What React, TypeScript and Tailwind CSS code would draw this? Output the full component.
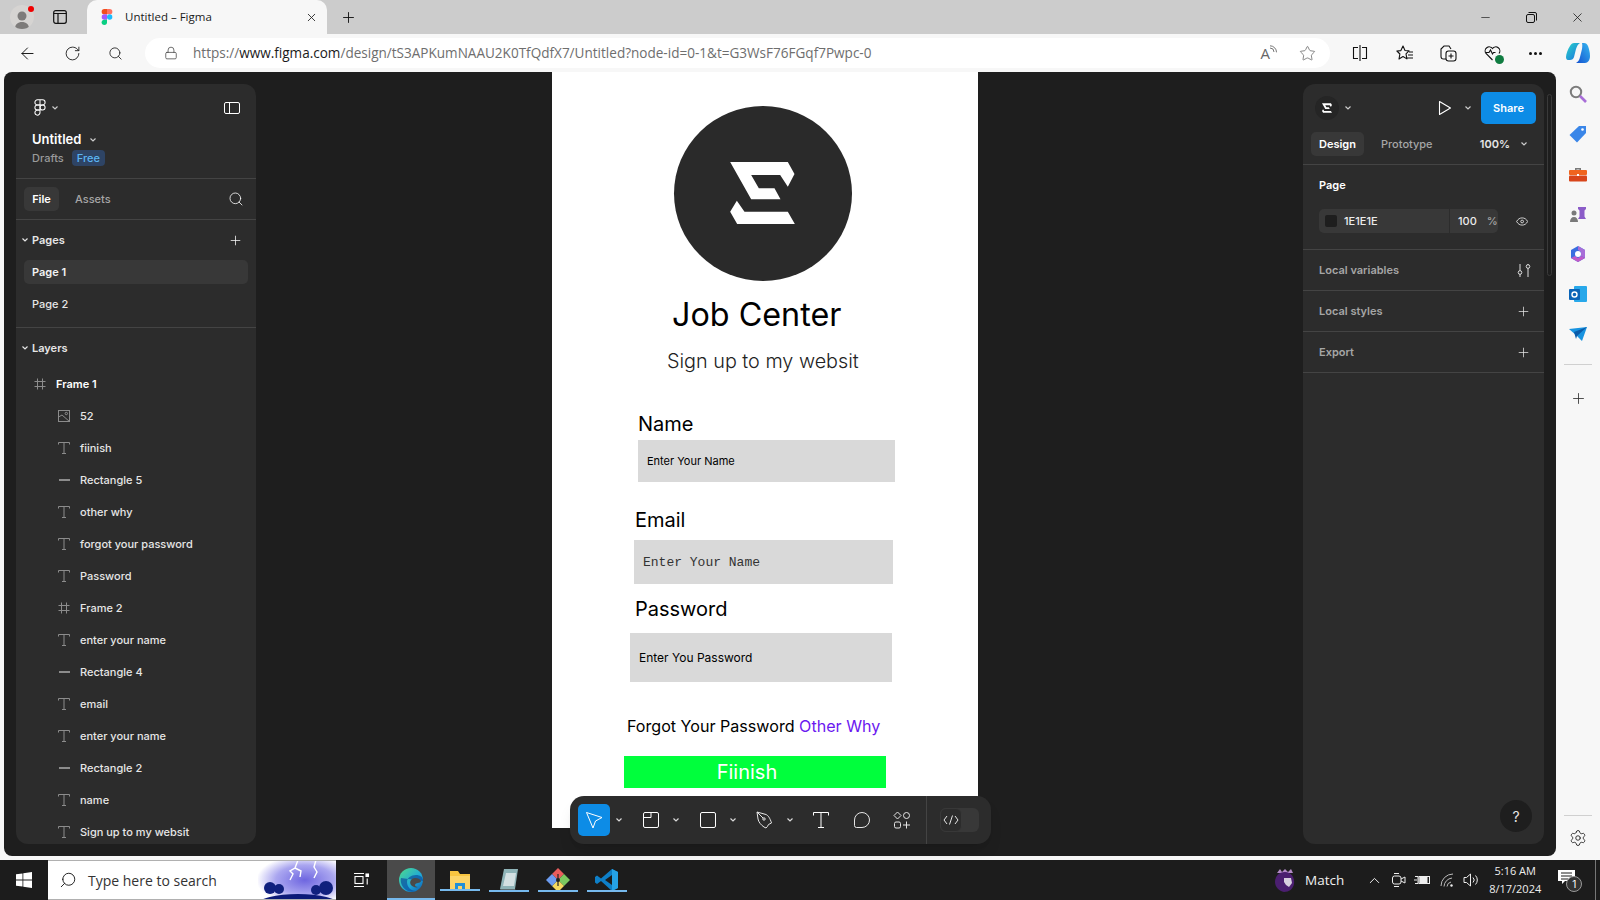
import React from 'react'
import { ArrowLeft, RotateCw, Search, Lock, Star, Plus, X, Minus, ChevronUp, Settings } from 'lucide-react'

const Chevron = ({ className = '' }: { className?: string }) => (
  <svg width="8" height="6" viewBox="0 0 8 6" className={className} fill="none" stroke="currentColor" strokeWidth="1.2">
    <path d="M1.5 1.5 4 4l2.5-2.5" />
  </svg>
)

const LogoMark = ({ className = '' }: { className?: string }) => (
  <svg viewBox="272 216 194 186" className={className} fill="#fff">
    <polygon points="272,216 445,216 465,252 445,290 422,255 335,255 358,295 405,295 423,328 335,328" />
    <polygon points="292,332 272,365 293,402 466,402 445,365 315,365" />
  </svg>
)

const FigmaOutline = () => (
  <svg width="14" height="17" viewBox="0 0 14 20" fill="none" stroke="#fff" strokeWidth="1.2">
    <path d="M7 1H4a3 3 0 0 0 0 6h3V1Zm0 0h3a3 3 0 0 1 0 6H7" />
    <path d="M7 7H4a3 3 0 0 0 0 6h3V7Z" />
    <circle cx="10" cy="10" r="3" />
    <path d="M7 13H4a3 3 0 1 0 3 3v-3Z" />
  </svg>
)

const FigmaColor = () => (
  <svg width="12" height="16" viewBox="0 0 12 18">
    <path d="M6 0H3a3 3 0 0 0 0 6h3V0Z" fill="#f24e1e" />
    <path d="M6 0h3a3 3 0 0 1 0 6H6V0Z" fill="#ff7262" />
    <path d="M6 6H3a3 3 0 0 0 0 6h3V6Z" fill="#a259ff" />
    <circle cx="9" cy="9" r="3" fill="#1abcfe" />
    <path d="M3 12h3v3a3 3 0 1 1-3-3Z" fill="#0acf83" />
  </svg>
)

const SidebarToggle = () => (
  <svg width="16" height="12" viewBox="0 0 16 12" fill="none" stroke="#fff" strokeWidth="1">
    <rect x="0.5" y="0.5" width="15" height="11" rx="1.5" />
    <path d="M5.5 0.5v11" />
  </svg>
)

const HashIcon = ({ color = '#8c8c8c' }: { color?: string }) => (
  <svg width="12" height="12" viewBox="0 0 12 12" fill="none" stroke={color} strokeWidth="1">
    <path d="M3.5 0.5v11M8.5 0.5v11M0.5 3.5h11M0.5 8.5h11" />
  </svg>
)

const TextIcon = () => (
  <svg width="12" height="12" viewBox="0 0 12 12" fill="none" stroke="#8c8c8c" strokeWidth="1">
    <path d="M0.5 2.5v-2h11v2M6 0.5v11M4 11.5h4" />
  </svg>
)

const RectIcon = () => <div className="h-[2px] w-[11px] bg-[#8c8c8c]" />

const ImageIcon = () => (
  <svg width="12" height="12" viewBox="0 0 12 12" fill="none" stroke="#8c8c8c" strokeWidth="1">
    <rect x="0.5" y="0.5" width="11" height="11" />
    <circle cx="8.3" cy="3.5" r="1.2" />
    <path d="M0.5 7 4 5l7.5 6.5" />
  </svg>
)

const layers: { name: string; icon: 'text' | 'rect' | 'image' | 'frame' }[] = [
  { name: '52', icon: 'image' },
  { name: 'fiinish', icon: 'text' },
  { name: 'Rectangle 5', icon: 'rect' },
  { name: 'other why', icon: 'text' },
  { name: 'forgot your password', icon: 'text' },
  { name: 'Password', icon: 'text' },
  { name: 'Frame 2', icon: 'frame' },
  { name: 'enter your name', icon: 'text' },
  { name: 'Rectangle 4', icon: 'rect' },
  { name: 'email', icon: 'text' },
  { name: 'enter your name', icon: 'text' },
  { name: 'Rectangle 2', icon: 'rect' },
  { name: 'name', icon: 'text' },
  { name: 'Sign up to my websit', icon: 'text' },
]

const LeftPanel = () => (
  <aside className="flex h-full w-[240px] flex-col overflow-hidden rounded-xl bg-[#2c2c2c] text-[11px] font-medium text-[#e6e6e6]">
    <div className="h-[95px] shrink-0 border-b border-[#444444] px-4">
      <div className="flex h-[47px] items-center justify-between">
        <div className="flex items-center gap-[4px] pl-[1px] text-[#cccccc]">
          <FigmaOutline />
          <Chevron />
        </div>
        <SidebarToggle />
      </div>
      <div className="flex h-[18px] items-center gap-2 text-[13px] font-semibold text-white">
        Untitled
        <Chevron className="text-[#cccccc]" />
      </div>
      <div className="flex h-[18px] items-center gap-2 text-[#9a9a9a]">
        Drafts
        <span className="flex h-[16px] items-center rounded bg-[#2e4465] px-[5px] text-[#5bb5f2]">Free</span>
      </div>
    </div>
    <div className="flex h-[41px] shrink-0 items-center border-b border-[#444444] pl-2 pr-[12px]">
      <div className="flex h-[24px] w-[35px] items-center justify-center rounded-[5px] bg-[#383838] font-semibold text-white">File</div>
      <div className="ml-[16px] text-[#a6a6a6]">Assets</div>
      <Search size={16} strokeWidth={1.2} className="ml-auto text-white" />
    </div>
    <div className="h-[108px] shrink-0 border-b border-[#444444]">
      <div className="flex h-[40px] items-center pl-[5px] pr-[13px] font-semibold">
        <Chevron className="mr-[3px]" />
        Pages
        <Plus size={15} strokeWidth={1.2} className="ml-auto text-white" />
      </div>
      <div className="mx-2 flex h-[24px] items-center rounded-[5px] bg-[#383838] px-2 font-semibold text-[#f2f2f2]">Page 1</div>
      <div className="mx-2 mt-[8px] flex h-[24px] items-center px-2 text-[#e6e6e6]">Page 2</div>
    </div>
    <div className="flex h-[40px] shrink-0 items-center pl-[5px] font-semibold">
      <Chevron className="mr-[3px]" />
      Layers
    </div>
    <div className="flex h-[32px] shrink-0 items-center pl-[18px]">
      <HashIcon />
      <span className="ml-[10px] font-semibold text-white">Frame 1</span>
    </div>
    {layers.map((layer, i) => (
      <div key={i} className="flex h-[32px] shrink-0 items-center pl-[42px]">
        <div className="flex w-[12px] items-center justify-center">
          {layer.icon === 'text' && <TextIcon />}
          {layer.icon === 'rect' && <RectIcon />}
          {layer.icon === 'image' && <ImageIcon />}
          {layer.icon === 'frame' && <HashIcon />}
        </div>
        <span className="ml-[10px]">{layer.name}</span>
      </div>
    ))}
  </aside>
)

const RightPanel = () => (
  <aside className="relative flex h-full w-[241px] flex-col overflow-hidden rounded-xl bg-[#2c2c2c] text-[11px] font-medium text-[#e6e6e6]">
    <div className="h-[81px] shrink-0 border-b border-[#444444]">
      <div className="flex h-[48px] items-center pl-[12px] pr-2">
        <div className="flex h-[24px] w-[24px] items-center justify-center rounded-full bg-[#252525]">
          <LogoMark className="h-[10px] w-[10px]" />
        </div>
        <Chevron className="ml-[5px] text-[#cccccc]" />
        <svg width="14" height="16" viewBox="0 0 14 16" className="ml-auto mr-[12px]" fill="none" stroke="#fff" strokeWidth="1.1">
          <path d="M1.5 1.5v13L12.5 8 1.5 1.5Z" strokeLinejoin="round" />
        </svg>
        <Chevron className="mr-[9px] text-[#cccccc]" />
        <div className="flex h-[32px] w-[55px] items-center justify-center rounded-[5px] bg-[#0d8ce6] font-semibold text-white">Share</div>
      </div>
      <div className="flex h-[24px] items-center pl-2 pr-[16px]">
        <div className="flex h-[24px] w-[53px] items-center justify-center rounded-[5px] bg-[#383838] font-semibold text-white">Design</div>
        <div className="ml-[17px] text-[#a6a6a6]">Prototype</div>
        <div className="ml-auto font-semibold text-[#e6e6e6]">100%</div>
        <Chevron className="ml-[10px] text-[#cccccc]" />
      </div>
    </div>
    <div className="h-[85px] shrink-0 border-b border-[#444444] px-4">
      <div className="flex h-[40px] items-center font-semibold text-white">Page</div>
      <div className="mt-[4px] flex items-center">
        <div className="flex h-[24px] w-[184px] items-center rounded-[5px] bg-[#383838]">
          <div className="ml-[6px] h-[12px] w-[12px] rounded-[2px] bg-[#1e1e1e]" />
          <span className="ml-[7px] w-[105px] text-[#ececec]">1E1E1E</span>
          <div className="h-full w-px bg-[#2c2c2c]" />
          <span className="ml-[8px] text-[#ececec]">100</span>
          <span className="ml-[10px] text-[#a6a6a6]">%</span>
        </div>
        <svg width="16" height="11" viewBox="0 0 16 11" className="ml-[18px]" fill="none" stroke="#fff" strokeWidth="1">
          <path d="M.8 5.5C2.5 2.3 5 .8 8 .8s5.5 1.5 7.2 4.7C13.5 8.7 11 10.2 8 10.2S2.5 8.7.8 5.5Z" />
          <circle cx="8" cy="5.5" r="1.8" />
        </svg>
      </div>
    </div>
    <div className="flex h-[41px] shrink-0 items-center justify-between border-b border-[#444444] pl-4 pr-[13px] font-semibold text-[#a6a6a6]">
      Local variables
      <svg width="14" height="15" viewBox="0 0 14 15" fill="none" stroke="#ddd" strokeWidth="1">
        <path d="M3 1v7M3 11v3M11 1v1M11 5v9" />
        <circle cx="3" cy="9.5" r="1.8" />
        <circle cx="11" cy="3.5" r="1.8" />
      </svg>
    </div>
    <div className="flex h-[41px] shrink-0 items-center justify-between border-b border-[#444444] pl-4 pr-[13px] font-semibold text-[#a6a6a6]">
      Local styles
      <Plus size={15} strokeWidth={1.2} className="text-[#e6e6e6]" />
    </div>
    <div className="flex h-[41px] shrink-0 items-center justify-between border-b border-[#444444] pl-4 pr-[13px] font-semibold text-[#a6a6a6]">
      Export
      <Plus size={15} strokeWidth={1.2} className="text-[#e6e6e6]" />
    </div>
    <div className="absolute bottom-[12px] right-[12px] flex h-[32px] w-[32px] items-center justify-center rounded-full bg-[#1e1e1e] text-[14px] font-normal text-[#e6e6e6]">?</div>
  </aside>
)

// the design frame is a free canvas, its nodes sit where the designer dropped them
const DesignFrame = () => (
  <div className="absolute left-[548px] top-0 h-[756px] w-[426px] overflow-hidden bg-white font-['Inter',sans-serif] text-black">
    <div className="absolute left-[122px] top-[34px] flex h-[175px] w-[178px] items-center justify-center rounded-[50%] bg-[#2a2a2a]">
      <LogoMark className="mb-[2px] mr-[2px] h-[62px] w-[65px]" />
    </div>
    <div className="absolute left-[120px] top-[223px] whitespace-nowrap text-[32.3px] leading-[40px]">Job Center</div>
    <div className="absolute left-[115px] top-[277px] whitespace-nowrap text-[19.8px] font-light leading-[24px] text-[#222222]">Sign up to my websit</div>

    <div className="absolute left-[86px] top-[340px] text-[20px] leading-[24px]">Name</div>
    <div className="absolute left-[86px] top-[368px] flex h-[42px] w-[257px] items-center bg-[#d9d9d9] pl-[9px] text-[11px]">Enter Your Name</div>

    <div className="absolute left-[83px] top-[436px] text-[20px] leading-[24px]">Email</div>
    <div className="absolute left-[82px] top-[468px] flex h-[44px] w-[259px] items-center bg-[#d9d9d9] pl-[9px] pt-[1px] font-['Liberation_Mono',monospace] text-[13px] text-[#333333]">Enter Your Name</div>

    <div className="absolute left-[83px] top-[525px] text-[20px] leading-[24px]">Password</div>
    <div className="absolute left-[78px] top-[561px] flex h-[49px] w-[262px] items-center bg-[#d9d9d9] pl-[9px] text-[12px]">Enter You Password</div>

    <div className="absolute left-[75px] top-[644px] whitespace-nowrap text-[16.1px] leading-[20px]">
      Forgot Your Password <span className="text-[#6b18f0]">Other Why</span>
    </div>
    <div className="absolute left-[72px] top-[684px] flex h-[32px] w-[262px] items-center justify-center bg-[#00ff3c] pr-[16px] text-[20px] text-white">Fiinish</div>
  </div>
)

const ToolChevron = () => <Chevron className="mx-[5px] text-[#d9d9d9]" />

const Toolbar = () => (
  <div className="absolute bottom-[12px] left-[566px] flex h-[48px] w-[421px] items-center rounded-[14px] bg-[#2c2c2c] pl-2 shadow-lg">
    <div className="flex h-[32px] w-[32px] items-center justify-center rounded-[5px] bg-[#0d8ce6]">
      <svg width="18" height="18" viewBox="0 0 18 18" fill="none" stroke="#fff" strokeWidth="1">
        <path d="M1.5 1.5 17 6.5l-6.5 3.5L8 17 1.5 1.5Z" strokeLinejoin="round" />
      </svg>
    </div>
    <ToolChevron />
    <div className="ml-[7px] flex w-[32px] items-center justify-center">
      <svg width="16" height="16" viewBox="0 0 16 16" fill="none" stroke="#fff" strokeWidth="1">
        <rect x="0.5" y="0.5" width="15" height="15" rx="1.5" />
        <path d="M0.5 5.5h7.5v-5" />
      </svg>
    </div>
    <ToolChevron />
    <div className="ml-[7px] flex w-[32px] items-center justify-center">
      <svg width="16" height="16" viewBox="0 0 16 16" fill="none" stroke="#fff" strokeWidth="1">
        <rect x="0.5" y="0.5" width="15" height="15" rx="1.5" />
      </svg>
    </div>
    <ToolChevron />
    <div className="ml-[7px] flex w-[32px] items-center justify-center">
      <svg width="18" height="18" viewBox="0 0 18 18" fill="none" stroke="#e6e6e6" strokeWidth="1">
        <path d="M1 1l9 2.5c2 .8 4 3.5 5.5 8.5l-3 1.5c-.5 1.5-1.5 2.500-2.500 3.500l-2-1c-3-2-5.500-5-6-8L1 1Z" strokeLinejoin="round" />
        <path d="M1 1l6 6" />
        <circle cx="8" cy="8" r="1.2" />
      </svg>
    </div>
    <ToolChevron />
    <div className="ml-[6px] flex w-[32px] items-center justify-center">
      <svg width="16" height="16" viewBox="0 0 16 16" fill="none" stroke="#fff" strokeWidth="1">
        <path d="M0.5 3.5v-3h15v3M8 0.5v15M5 15.5h6" />
      </svg>
    </div>
    <div className="ml-[9px] flex w-[32px] items-center justify-center">
      <svg width="16" height="16" viewBox="0 0 16 16" fill="none" stroke="#e6e6e6" strokeWidth="1">
        <path d="M8 .5a7.5 7.5 0 1 1 0 15H2.500a2 2 0 0 1-2-2V8A7.500 7.500 0 0 1 8 .5Z" />
      </svg>
    </div>
    <div className="ml-[8px] flex w-[32px] items-center justify-center">
      <svg width="18" height="18" viewBox="0 0 18 18" fill="none" stroke="#e6e6e6" strokeWidth="1">
        <path d="M4.5 1 8 4.5 4.5 8 1 4.5 4.5 1Z" />
        <circle cx="13.5" cy="4.5" r="3" />
        <rect x="1.5" y="11" width="6" height="6" rx="1.5" />
        <path d="M13.5 10.5v7M10 14h7" />
      </svg>
    </div>
    <div className="ml-[8px] h-full w-px bg-[#444444]" />
    <div className="ml-[13px] flex h-[24px] w-[39px] items-center rounded-[6px] bg-[#383838]">
      <div className="flex h-[24px] w-[22px] items-center justify-center rounded-[6px] border border-[#383838] bg-[#2c2c2c] text-white">
        <svg width="16" height="10" viewBox="0 0 16 10" fill="none" stroke="#e6e6e6" strokeWidth="1">
          <path d="M4 1 1 5l3 4M12 1l3 4-3 4M9.5 .5l-3 9" />
        </svg>
      </div>
    </div>
  </div>
)

const TitleBar = () => (
  <div className="relative flex h-[34px] shrink-0 items-end bg-[#cccccc] pl-[10px]">
    <div className="flex h-[24px] w-[24px] items-end justify-center self-center overflow-hidden rounded-full bg-[#d6d4d2]">
      <svg width="14" height="18" viewBox="0 0 14 18" fill="#7d7b7a">
        <circle cx="7" cy="5" r="4.5" />
        <path d="M0 18c0-5 3-7 7-7s7 2 7 7H0Z" />
      </svg>
    </div>
    <div className="absolute left-[28px] top-[6px] h-[6px] w-[6px] rounded-full bg-[#f00000]" />
    <div className="ml-[19px] flex h-[34px] items-center">
      <svg width="14" height="14" viewBox="0 0 14 14" fill="none" stroke="#111" strokeWidth="1.2">
        <rect x="0.7" y="0.7" width="12.6" height="12.6" rx="2" />
        <path d="M0.7 3.5h12.6M5 3.5v9.8" />
      </svg>
    </div>
    <div className="ml-[20px] flex h-[34px] w-[240px] items-center rounded-t-[10px] bg-[#f7f7f7] pl-[14px] pr-[9px] text-[11.5px] text-[#1a1a1a]">
      <FigmaColor />
      <span className="ml-[12px]">Untitled – Figma</span>
      <X size={13} strokeWidth={1.6} className="ml-auto text-[#222222]" />
    </div>
    <div className="ml-[13px] flex h-[34px] items-center">
      <Plus size={17} strokeWidth={1.3} className="text-[#111111]" />
    </div>
    <div className="ml-auto flex h-[34px] items-center">
      <div className="flex w-[46px] justify-center"><Minus size={13} strokeWidth={1.2} className="text-[#111111]" /></div>
      <div className="flex w-[46px] justify-center">
        <svg width="11" height="11" viewBox="0 0 11 11" fill="none" stroke="#111" strokeWidth="1">
          <rect x="0.5" y="2.5" width="8" height="8" rx="1.5" />
          <path d="M2.5 .5H9A1.5 1.5 0 0 1 10.5 2v6.5" />
        </svg>
      </div>
      <div className="flex w-[46px] justify-center"><X size={15} strokeWidth={1.2} className="text-[#111111]" /></div>
    </div>
  </div>
)

const AddressBar = () => (
  <div className="flex h-[38px] shrink-0 items-center bg-[#f7f7f7]">
    <ArrowLeft size={19} strokeWidth={1.2} className="ml-[18px] text-[#111111]" />
    <RotateCw size={17} strokeWidth={1.3} className="ml-[27px] text-[#222222]" />
    <Search size={15} strokeWidth={1.4} className="ml-[27px] text-[#222222]" />
    <div className="ml-[22px] flex h-[30px] w-[1185px] items-center rounded-full bg-white pl-[19px] pr-[14px]">
      <Lock size={14} strokeWidth={1.3} className="text-[#444444]" />
      <span className="ml-[15px] whitespace-nowrap text-[13.55px] text-[#6e6e6e]">
        https://<span className="text-[#1a1a1a]">www.figma.com</span>/design/tS3APKumNAAU2K0TfQdfX7/Untitled?node-id=0-1&amp;t=G3WsF76FGqf7Pwpc-0
      </span>
      <div className="ml-auto flex items-center gap-[29px] text-[#666666]">
        <span className="relative -ml-[4px] text-[15px] leading-none">
          A
          <svg width="8" height="8" viewBox="0 0 8 8" fill="none" stroke="#666" strokeWidth="0.9" className="absolute -right-[8px] -top-[1px]">
            <path d="M0 3a4 4 0 0 1 4 4M0 .8a6.5 6.5 0 0 1 6.5 6.5" />
          </svg>
        </span>
        <Star size={17} strokeWidth={1.1} />
      </div>
    </div>
    <svg width="16" height="16" viewBox="0 0 16 16" className="ml-[22px]" fill="none" stroke="#111" strokeWidth="1.1">
      <path d="M8 0v16M6 2.5H1.5v11H6M10 2.5h4.5v11H10" />
    </svg>
    <svg width="18" height="16" viewBox="0 0 18 16" className="ml-[28px]" fill="none" stroke="#111" strokeWidth="1.1">
      <path d="M7 1 9 5.5l4 .4-3 3 .9 5L7 11.5 3 14l.9-5-3-3 4-.4L7 1ZM13 7h4M12 10h5M11 13h6" strokeLinejoin="round" />
    </svg>
    <svg width="17" height="17" viewBox="0 0 17 17" className="ml-[26px]" fill="none" stroke="#111" strokeWidth="1.1">
      <path d="M6 14H3.5A2.5 2.5 0 0 1 1 11.5V4l3-3h5l2 3" />
      <rect x="6" y="6" width="10" height="10" rx="2.5" />
      <path d="M11 8.5v5M8.5 11h5" />
    </svg>
    <div className="relative ml-[27px]">
      <svg width="17" height="16" viewBox="0 0 17 16" fill="none" stroke="#111" strokeWidth="1.1">
        <path d="M8.5 15 2 8.5a4 4 0 0 1 6.5-5 4 4 0 0 1 6.5 5M2 7.5h3l1.5-2.5 2 4 1-1.5h2" />
      </svg>
      <div className="absolute -bottom-[3px] -right-[3px] h-[9px] w-[9px] rounded-full bg-[#107c41]" />
    </div>
    <div className="ml-[28px] flex gap-[2px]">
      <div className="h-[3px] w-[3px] rounded-full bg-[#111111]" />
      <div className="h-[3px] w-[3px] rounded-full bg-[#111111]" />
      <div className="h-[3px] w-[3px] rounded-full bg-[#111111]" />
    </div>
    <svg width="24" height="22" viewBox="0 0 24 22" className="ml-[24px]">
      <defs>
        <linearGradient id="cop1" x1="0" y1="0" x2="1" y2="1">
          <stop offset="0" stopColor="#2ad5c8" />
          <stop offset="1" stopColor="#1a6fe0" />
        </linearGradient>
        <linearGradient id="cop2" x1="1" y1="0" x2="0" y2="1">
          <stop offset="0" stopColor="#35b8f0" />
          <stop offset="1" stopColor="#1450d0" />
        </linearGradient>
      </defs>
      <path d="M8 1h6c-2 1-3 3-4 6l-2 8c-.5 2-2 3-4 3H2c-1.5 0-2-1.5-2-3 0-3 2-8 4-11 1-2 2.5-3 4-3Z" fill="url(#cop1)" />
      <path d="M16 1h2c2 0 3 1 4 3 1 3 2 6 2 10 0 4-2 7-5 7h-9c2-1 3.5-3 4-6l2-8c.3-2 .5-4 0-6Z" fill="url(#cop2)" />
    </svg>
  </div>
)

const SideRail = () => (
  <div className="flex h-full w-[44px] shrink-0 flex-col items-center bg-[#f7f7f7] pt-[13px]">
    <svg width="18" height="18" viewBox="0 0 18 18" fill="none">
      <circle cx="7" cy="7" r="5.2" stroke="#7c7c7c" strokeWidth="2" />
      <path d="m11 11 6 6" stroke="#a86ed8" strokeWidth="2.6" />
    </svg>
    <svg width="18" height="18" viewBox="0 0 18 18" className="mt-[22px]">
      <path d="M10 1h7v7l-9 9.5L.5 10 10 1Z" fill="#3a86e8" />
      <circle cx="13.5" cy="4.5" r="1.3" fill="#fff" />
    </svg>
    <svg width="18" height="16" viewBox="0 0 18 16" className="mt-[24px]">
      <path d="M6 1h6v2h-1.5v-.5h-3V3H6V1Z" fill="#7a7a7a" />
      <rect y="3" width="18" height="5" rx="1" fill="#f0641e" />
      <rect y="8.5" width="18" height="6" rx="1" fill="#d8451a" />
      <rect x="8" y="7" width="2" height="2" fill="#fff" />
    </svg>
    <svg width="18" height="18" viewBox="0 0 18 18" className="mt-[22px]">
      <path d="M9 2h8v2l-1.5 1.5v6L17 14H9l1.5-2.5v-6L9 4V2Z" fill="#8b5cc8" />
      <circle cx="5" cy="8" r="2.5" fill="#7a7a7a" />
      <path d="M1 17c0-3 1.5-5 4-5s4 2 4 5H1Z" fill="#7a7a7a" />
    </svg>
    <svg width="18" height="18" viewBox="0 0 18 18" className="mt-[22px]">
      <path d="M9 1l7 4v8l-7 4-7-4V5l7-4Z" fill="#3a6ee0" />
      <path d="M9 1l7 4v8l-4-2V7L9 5V1Z" fill="#a86ed8" />
      <path d="M2 13l4-2 3 2 3-2 4 2-7 4-7-4Z" fill="#c05ac8" />
      <circle cx="9" cy="9" r="3" fill="#fff" />
    </svg>
    <svg width="18" height="18" viewBox="0 0 18 18" className="mt-[22px]">
      <rect x="5" y="1" width="13" height="16" rx="1" fill="#28a8ea" />
      <rect x="0" y="4" width="11" height="11" rx="1" fill="#0a64b8" />
      <circle cx="5.5" cy="9.5" r="2.5" fill="none" stroke="#fff" strokeWidth="1.4" />
    </svg>
    <svg width="18" height="14" viewBox="0 0 18 14" className="mt-[24px]">
      <path d="M0 2 18 0 13 14 8 9 0 2Z" fill="#1893e0" />
      <path d="M5 5 18 0 8 9l-1 3-2-7Z" fill="#0a5aa8" />
    </svg>
    <div className="mt-[23px] h-px w-[28px] bg-[#d0d0d0]" />
    <Plus size={17} strokeWidth={1.2} className="mt-[25px] text-[#333333]" />
    <div className="mt-auto h-px w-[28px] bg-[#d0d0d0]" />
    <Settings size={18} strokeWidth={1.2} className="mb-[13px] mt-[13px] text-[#222222]" />
  </div>
)

const TaskApp = ({ w, active, children }: { w: string; active?: boolean; children: React.ReactNode }) => (
  <div className={`relative flex h-full items-center justify-center ${w} ${active ? 'bg-[#4a4a4a]' : ''}`}>
    {children}
    <div className="absolute bottom-0 left-0 right-0 h-[2px] bg-[#76b9ed]" />
  </div>
)

const Taskbar = () => (
  <div className="relative flex h-[40px] shrink-0 items-center bg-[#1c1c1c] text-white">
    <div className="flex w-[48px] justify-center">
      <svg width="16" height="16" viewBox="0 0 16 16" fill="#fff">
        <path d="M0 2.3 6.5 1.400v6.200H0V2.300ZM7.300 1.300 16 0v7.600H7.300V1.300ZM0 8.400h6.500v6.200L0 13.700V8.400ZM7.300 8.400H16V16l-8.700-1.300V8.400Z" />
      </svg>
    </div>
    <div className="flex h-full w-[288px] items-center overflow-hidden border-y border-[#b0b0b0] bg-white text-black">
      <Search size={18} strokeWidth={1.2} className="ml-[11px] -scale-x-100 text-[#111111]" />
      <span className="ml-[11px] font-['Open_Sans',sans-serif] text-[14px] text-[#333333]">Type here to search</span>
      <svg width="78" height="40" viewBox="0 0 78 40" className="ml-auto shrink-0">
        <defs>
          <radialGradient id="sky" cx="0.6" cy="0.5" r="0.62">
            <stop offset="0" stopColor="#6e66e0" />
            <stop offset="0.6" stopColor="#aaa6f0" />
            <stop offset="1" stopColor="#ffffff" />
          </radialGradient>
        </defs>
        <rect width="78" height="40" fill="url(#sky)" />
        <path d="M40 0l-3 8-5 3 3 3-3 6M37 8l6 3-1 6M58 0l-2 7 3 5-3 6" stroke="#fff" strokeWidth="1.4" fill="none" />
        <ellipse cx="40" cy="44" rx="40" ry="10" fill="#0c1a78" />
        <circle cx="12" cy="28" r="6" fill="#10207e" />
        <circle cx="21" cy="29" r="5" fill="#10207e" />
        <circle cx="58" cy="30" r="5" fill="#10207e" />
        <circle cx="68" cy="28" r="7" fill="#10207e" />
      </svg>
    </div>
    <div className="flex w-[51px] justify-center">
      <svg width="16" height="16" viewBox="0 0 16 16" fill="none" stroke="#fff" strokeWidth="1.1">
        <path d="M0 1.5h10M0 14.5h10" />
        <rect x="1" y="4.5" width="8" height="7" />
        <rect x="12" y="2" width="2.5" height="2.5" fill="#fff" />
        <path d="M13.2 6.5v6" />
      </svg>
    </div>
    <TaskApp w="w-[48px]" active>
      <svg width="26" height="26" viewBox="0 0 26 26">
        <defs>
          <linearGradient id="edge" x1="0" y1="0" x2="1" y2="1">
            <stop offset="0" stopColor="#4fdc8a" />
            <stop offset="0.6" stopColor="#1fa8d8" />
            <stop offset="1" stopColor="#0c58b0" />
          </linearGradient>
        </defs>
        <circle cx="13" cy="13" r="12" fill="url(#edge)" />
        <path d="M25 14c0-4-3-6-7-6-5 0-9 3-9 7 0 5 4 9 9 9-3 1-7 1-10-1-4-3-6-8-5-12" fill="#0b4f9e" opacity="0.7" />
        <path d="M13 18c-2-3 0-7 4-7 3 0 5 1 6 3-1 3-5 1-6 4 0 1 1 2 3 2-2 1-5 0-7-2Z" fill="#4a4a4a" />
      </svg>
    </TaskApp>
    <div className="ml-[5px]">
      <TaskApp w="w-[40px]">
        <svg width="22" height="22" viewBox="0 0 22 22">
          <path d="M1 2h8l2 3h10v15H1V2Z" fill="#f7c440" />
          <rect x="1" y="7" width="20" height="13" fill="#fbd468" />
          <rect x="6" y="14" width="10" height="6" fill="#1f8fd8" />
          <rect x="9" y="17" width="4" height="3" fill="#fbd468" />
        </svg>
      </TaskApp>
    </div>
    <div className="ml-[9px]">
      <TaskApp w="w-[40px]">
        <svg width="22" height="24" viewBox="0 0 22 24">
          <path d="M6 1h14l-3 20H2L6 1Z" fill="#8fb4b8" />
          <path d="M2 21h15l1 2H3l-1-2Z" fill="#5f6c70" />
          <path d="M8 5h10l-2 13H5L8 5Z" fill="#d4e0e2" />
        </svg>
      </TaskApp>
    </div>
    <div className="ml-[9px]">
      <TaskApp w="w-[40px]">
        <svg width="24" height="24" viewBox="0 0 24 24">
          <path d="M12 0 18 6 12 12 6 6Z" fill="#e85c5c" />
          <path d="M18 6l6 6-6 6-6-6Z" fill="#7cc860" />
          <path d="M12 12l6 6-6 6-6-6Z" fill="#f4d860" />
          <path d="M6 6l6 6-6 6-6-6Z" fill="#6c9cf0" />
          <circle cx="12" cy="12" r="2" fill="#222222" />
          <path d="M12 6v12" stroke="#222222" strokeWidth="1.2" />
        </svg>
      </TaskApp>
    </div>
    <div className="ml-[9px]">
      <TaskApp w="w-[40px]">
        <svg width="24" height="24" viewBox="0 0 24 24">
          <path d="M17 1 23 4v16l-6 3-11-10-4 3-2-1.500V9l2-1.500 4 3L17 1Z" fill="#0e7fc8" />
          <path d="M17 7 10 12l7 5V7Z" fill="#1c1c1c" />
          <path d="M17 1 23 4v16l-6 3V1Z" fill="#25a3e8" />
        </svg>
      </TaskApp>
    </div>
    <svg width="22" height="26" viewBox="0 0 22 26" className="ml-[647px]">
      <path d="M3 6 6 2l2 3 3-3 3 3 3-3 2 4H3Z" fill="#b38ac8" />
      <path d="M11 5c6 0 10 5 9 12-1 5-5 8-10 8-5-1-9-5-9-10 0-6 4-10 10-10Z" fill="#4b1f70" />
      <path d="M10 11h7l1 5-3 4-3-2-2-3v-4Z" fill="#d8d0e0" />
    </svg>
    <span className="ml-[9px] font-['Open_Sans',sans-serif] text-[13.5px] text-[#f0f0f0]">Match</span>
    <ChevronUp size={17} strokeWidth={1.4} className="ml-[22px] text-[#eeeeee]" />
    <svg width="14" height="16" viewBox="0 0 14 16" className="ml-[9px]" fill="none" stroke="#eee" strokeWidth="1">
      <rect x="0.5" y="4" width="8.5" height="8" rx="2" />
      <path d="M9 7l4-2v6l-4-2M2 1.5h5M2 14.5h5" />
    </svg>
    <svg width="17" height="12" viewBox="0 0 17 12" className="ml-[8px]" fill="none" stroke="#eee" strokeWidth="1">
      <rect x="5" y="2.5" width="10.5" height="7" />
      <rect x="6" y="3.5" width="7" height="5" fill="#eee" />
      <path d="M0 6h3M1 2.5h3v7H1" />
    </svg>
    <svg width="14" height="14" viewBox="0 0 14 14" className="ml-[9px]" fill="none" stroke="#bbb" strokeWidth="1">
      <path d="M1 13A12 12 0 0 1 13 1M4 13.5A9 9 0 0 1 12 5M7 13.5A5 5 0 0 1 11 9" />
      <circle cx="11.5" cy="12.5" r="1.2" fill="#eee" stroke="none" />
    </svg>
    <svg width="17" height="16" viewBox="0 0 17 16" className="ml-[9px]" fill="none" stroke="#eee" strokeWidth="1">
      <path d="M1 5.5h2.500L7.500 2v12l-4-3.500H1v-5ZM10 5.500a3.500 3.500 0 0 1 0 5M12.500 3.500a6.500 6.500 0 0 1 0 9" />
    </svg>
    <div className="ml-[5px] flex w-[60px] flex-col items-center font-['Open_Sans',sans-serif] text-[11px] leading-[18px] text-[#eeeeee]">
      <span className="whitespace-nowrap">5:16 AM</span>
      <span className="whitespace-nowrap">8/17/2024</span>
    </div>
    <div className="relative ml-[13px] h-[24px] w-[24px]">
      <svg width="17" height="15" viewBox="0 0 17 15" className="absolute left-0 top-[2px]">
        <path d="M0 0h17v11H7l-3 3v-3H0V0Z" fill="#fff" />
        <path d="M3 3h11M3 6h11M3 9h7" stroke="#1c1c1c" strokeWidth="1" />
      </svg>
      <div className="absolute left-[8px] top-[8px] flex h-[16px] w-[16px] items-center justify-center rounded-full border border-[#999999] bg-[#333333] text-[10px]">1</div>
    </div>
    <div className="absolute bottom-0 right-[4px] top-0 w-px bg-[#777777]" />
  </div>
)

export default function App() {
  return (
    <div className="flex h-[900px] w-[1600px] flex-col overflow-hidden bg-white font-['Inter',sans-serif]">
      <div className="font-['Open_Sans',sans-serif]">
        <TitleBar />
        <AddressBar />
      </div>
      <div className="flex h-[788px] shrink-0 bg-[#f7f7f7]">
        <div className="relative mb-[4px] ml-[4px] flex-1 rounded-lg bg-[#1e1e1e]">
          <DesignFrame />
          <div className="absolute inset-0 flex justify-between p-3">
            <LeftPanel />
            <RightPanel />
          </div>
          <Toolbar />
          <div className="absolute left-[1543px] top-[22px] h-[182px] w-[5px] rounded-full border border-[#3a3a3a]" />
        </div>
        <SideRail />
      </div>
      <Taskbar />
    </div>
  )
}
